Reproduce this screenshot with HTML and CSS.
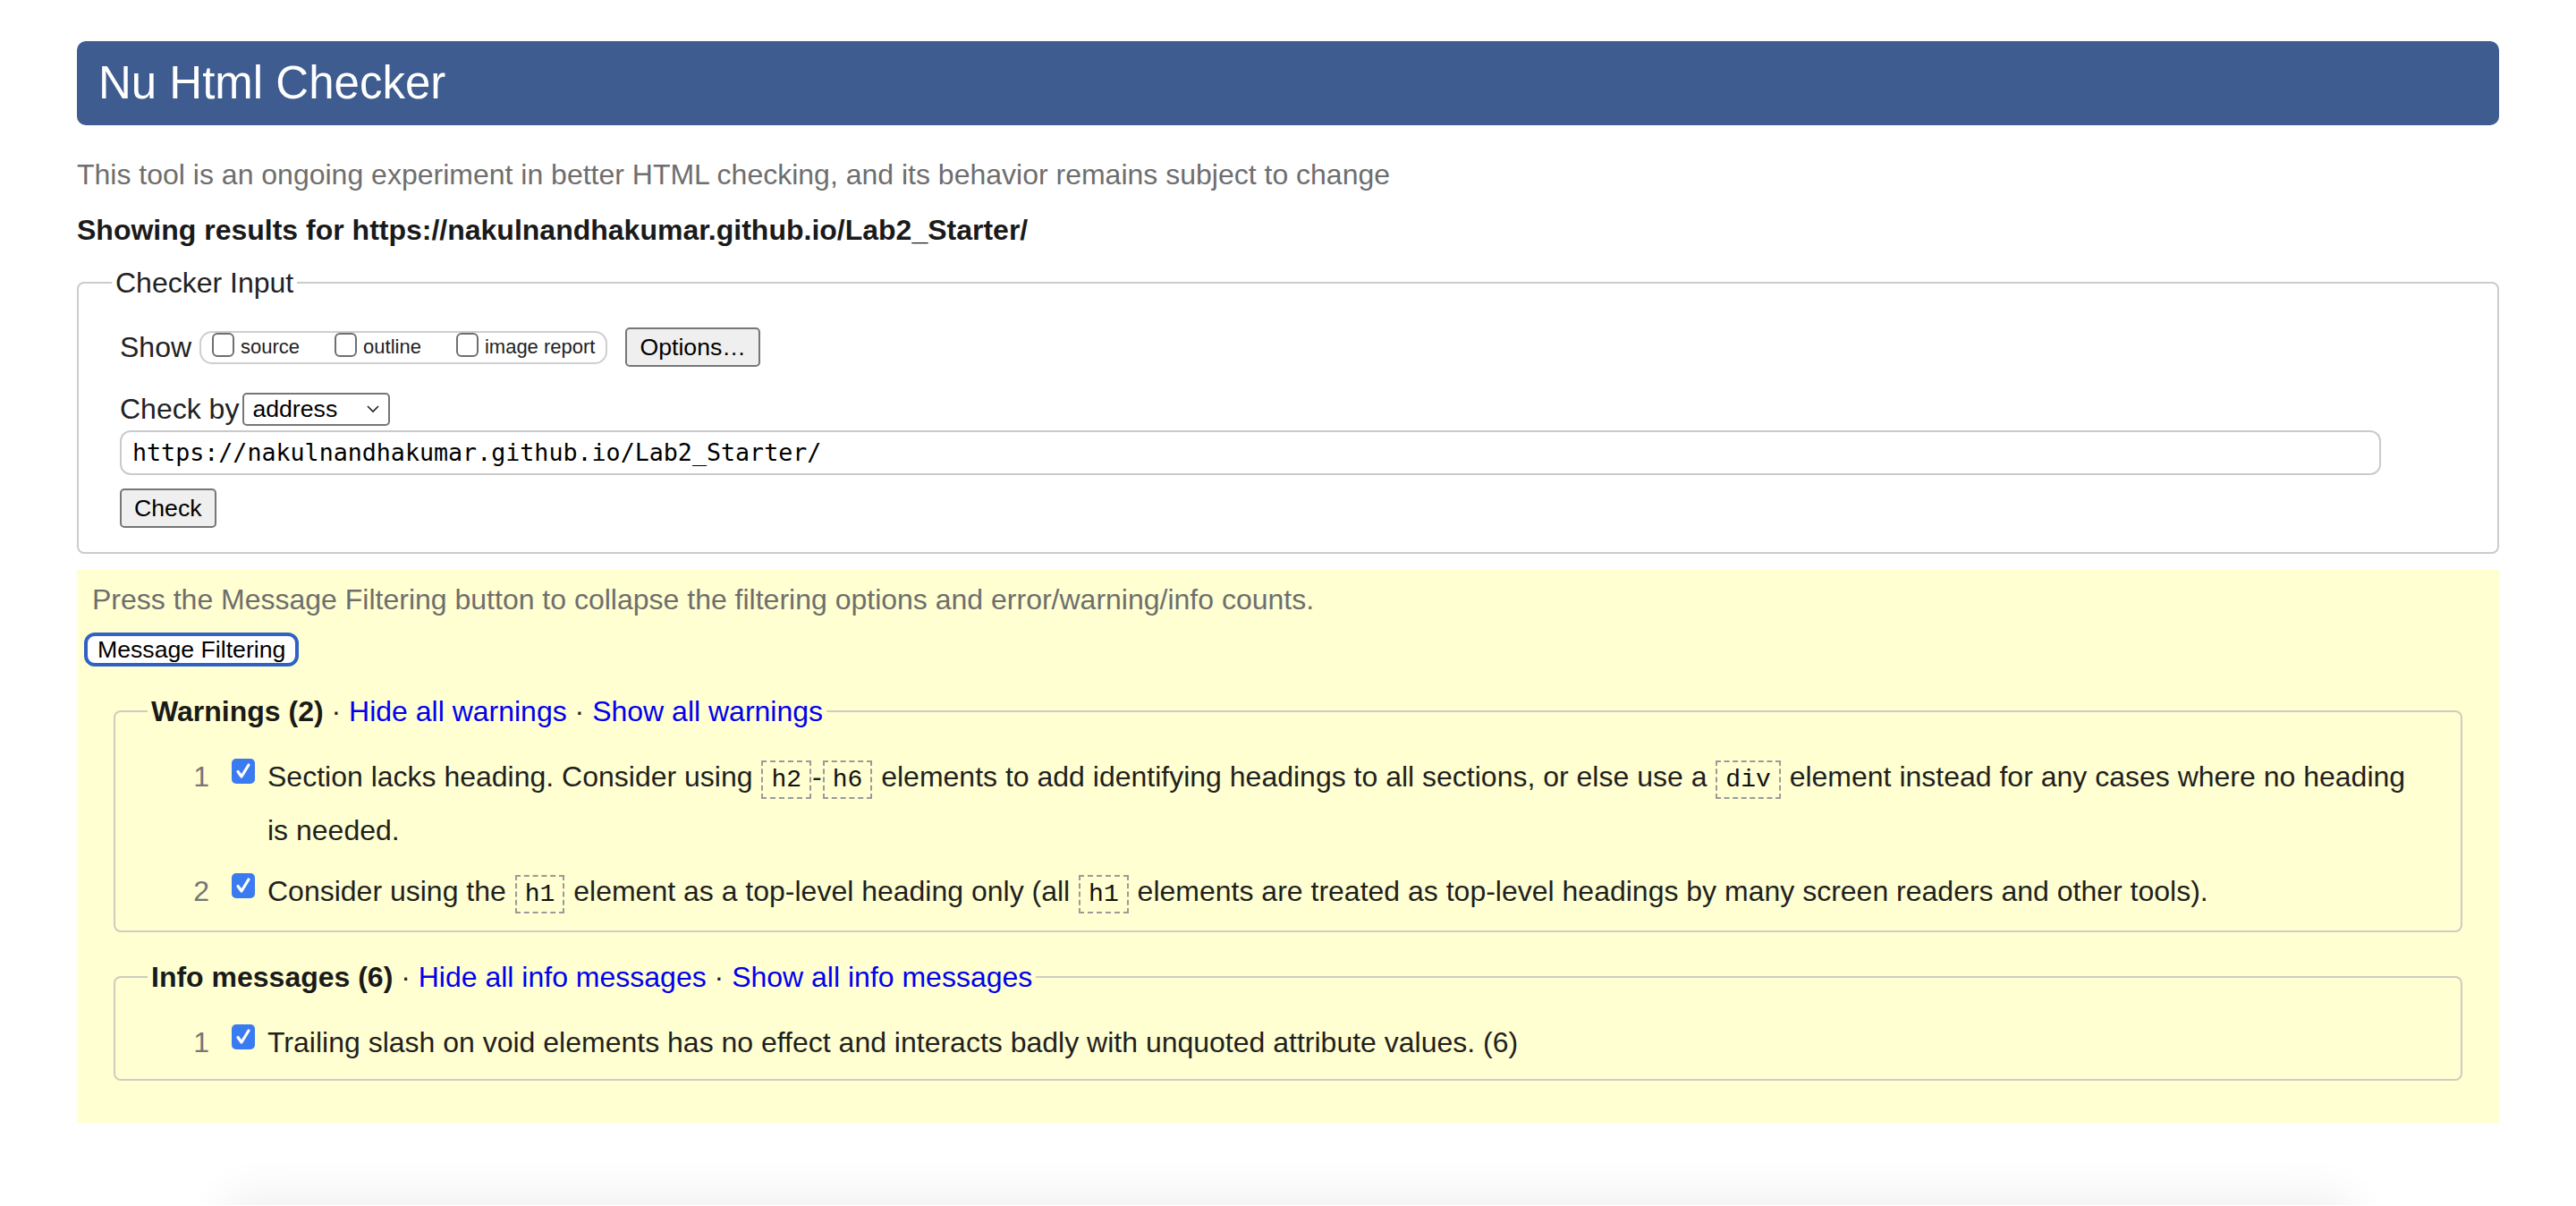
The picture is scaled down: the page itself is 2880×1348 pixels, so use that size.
FILE: index.html
```html
<!DOCTYPE html>
<html lang="en">
<head>
<meta charset="utf-8">
<title>Showing results for https://nakulnandhakumar.github.io/Lab2_Starter/ - Nu Html Checker</title>
<link rel="stylesheet" href="styles.css">
</head>
<body>
<div class="page">
  <h1 class="brand">Nu Html Checker</h1>
  <p class="tagline">This tool is an ongoing experiment in better HTML checking, and its behavior remains subject to change</p>
  <p class="results-for">Showing results for https://nakulnandhakumar.github.io/Lab2_Starter/</p>

  <fieldset class="input-box">
    <legend>Checker Input</legend>
    <div class="row show-row">
      <span class="label">Show</span>
      <span class="show-opts">
        <span class="opt"><span class="cb"></span>source</span>
        <span class="opt"><span class="cb"></span>outline</span>
        <span class="opt"><span class="cb"></span>image report</span>
      </span>
      <button class="btn" type="button">Options…</button>
    </div>
    <div class="row checkby-row">
      <span class="label">Check by</span>
      <span class="select">address<svg class="chev" width="14" height="10" viewBox="0 0 14 10"><path d="M1 2 L7 8 L13 2" fill="none" stroke="#222" stroke-width="1.6"/></svg></span>
    </div>
    <div class="url">https://nakulnandhakumar.github.io/Lab2_Starter/</div>
    <button class="btn check-btn" type="button">Check</button>
  </fieldset>

  <section class="filters">
    <p class="filter-hint">Press the Message Filtering button to collapse the filtering options and error/warning/info counts.</p>
    <button class="mf-btn" type="button">Message Filtering</button>

    <fieldset class="group">
      <legend><strong>Warnings (2)</strong> · <a href="#">Hide all warnings</a> · <a href="#">Show all warnings</a></legend>
      <div class="msg">
        <span class="num">1</span>
        <span class="ck"><svg width="26" height="28" viewBox="0 0 26 28"><rect x="0" y="0" width="26" height="28" rx="5" fill="#3b7bf2"/><path d="M7 14.5 L11 20 L19 7" fill="none" stroke="#fff" stroke-width="3.2" stroke-linecap="round" stroke-linejoin="round"/></svg></span>
        <span class="txt">Section lacks heading. Consider using <code>h2</code>-<code>h6</code> elements to add identifying headings to all sections, or else use a <code>div</code> element instead for any cases where no heading is needed.</span>
      </div>
      <div class="msg">
        <span class="num">2</span>
        <span class="ck"><svg width="26" height="28" viewBox="0 0 26 28"><rect x="0" y="0" width="26" height="28" rx="5" fill="#3b7bf2"/><path d="M7 14.5 L11 20 L19 7" fill="none" stroke="#fff" stroke-width="3.2" stroke-linecap="round" stroke-linejoin="round"/></svg></span>
        <span class="txt">Consider using the <code>h1</code> element as a top-level heading only (all <code>h1</code> elements are treated as top-level headings by many screen readers and other tools).</span>
      </div>
    </fieldset>

    <fieldset class="group info">
      <legend><strong>Info messages (6)</strong> · <a href="#">Hide all info messages</a> · <a href="#">Show all info messages</a></legend>
      <div class="msg">
        <span class="num">1</span>
        <span class="ck"><svg width="26" height="28" viewBox="0 0 26 28"><rect x="0" y="0" width="26" height="28" rx="5" fill="#3b7bf2"/><path d="M7 14.5 L11 20 L19 7" fill="none" stroke="#fff" stroke-width="3.2" stroke-linecap="round" stroke-linejoin="round"/></svg></span>
        <span class="txt">Trailing slash on void elements has no effect and interacts badly with unquoted attribute values. (6)</span>
      </div>
    </fieldset>
  </section>

  <div class="shadow-strip"><div class="shadow-box"></div></div>
</div>
</body>
</html>
```

FILE: styles.css
```css
html, body {
  margin: 0;
  padding: 0;
  background: #ffffff;
}

body {
  font-family: "Liberation Sans", Arial, Helvetica, sans-serif;
  font-size: 32px;
  color: #222222;
}

.page {
  padding: 46px 86px 0 86px;
}

.brand {
  margin: 0;
  height: 94px;
  line-height: 94px;
  padding: 0 24px;
  background: #3e5c8f;
  color: #ffffff;
  font-size: 51px;
  font-weight: normal;
  border-radius: 10px;
}

.tagline {
  margin: 35px 0 0 0;
  line-height: 40px;
  color: #6e6e6e;
}

.results-for {
  margin: 22px 0 0 0;
  line-height: 40px;
  font-weight: bold;
  color: #1a1a1a;
}

.input-box {
  margin: 19px 0 0 0;
  padding: 30px 46px 27px 46px;
  border: 2px solid #cbcbcb;
  border-radius: 8px;
}

.input-box legend {
  padding: 0 4px;
  margin-left: -9px;
  line-height: 40px;
  font-size: 32px;
}

.row {
  display: flex;
  align-items: center;
}

.show-row {
  height: 44px;
}

.label {
  line-height: 40px;
  margin-right: 9px;
}

.checkby-row .label {
  margin-right: 4px;
}

.show-opts {
  display: inline-flex;
  align-items: center;
  height: 33px;
  padding: 0 12px;
  border: 2px solid #cfcfcf;
  border-radius: 14px;
  margin-right: 20px;
}

.opt {
  display: inline-flex;
  align-items: center;
  font-size: 22px;
  line-height: 30px;
  margin-right: 39px;
}

.opt:last-child {
  margin-right: 0;
}

.cb {
  display: inline-block;
  width: 21px;
  height: 23px;
  border: 2px solid #6f6f6f;
  border-radius: 6px;
  background: #ffffff;
  margin-right: 7px;
  margin-bottom: 6px;
}

.btn {
  font-family: "Liberation Sans", Arial, Helvetica, sans-serif;
  font-size: 26.67px;
  height: 44px;
  padding: 0 14px;
  background: #efefef;
  color: #000000;
  border: 2px solid #767676;
  border-radius: 5px;
}

.checkby-row {
  margin-top: 27px;
  height: 40px;
}

.select {
  display: inline-flex;
  align-items: center;
  justify-content: space-between;
  box-sizing: border-box;
  width: 165px;
  height: 37px;
  padding: 0 10px 0 9px;
  font-size: 26.67px;
  color: #000000;
  background: #ffffff;
  border: 2px solid #767676;
  border-radius: 5px;
}

.url {
  margin-top: 4px;
  box-sizing: border-box;
  width: 2528px;
  height: 50px;
  line-height: 46px;
  padding: 0 12px;
  border: 2px solid #cacaca;
  border-radius: 12px;
  font-family: "DejaVu Sans Mono", Menlo, monospace;
  font-size: 26.67px;
  color: #000000;
}

.check-btn {
  display: block;
  margin-top: 15px;
}

.filters {
  margin-top: 18px;
  background: #ffffd1;
  padding: 13px 41px 47px 0;
}

.filter-hint {
  margin: 0 0 0 17px;
  line-height: 40px;
  color: #6e6e6e;
}

.mf-btn {
  display: block;
  margin: 17px 0 0 8px;
  height: 38px;
  padding: 0 11px;
  font-family: "Liberation Sans", Arial, Helvetica, sans-serif;
  font-size: 26.67px;
  color: #000000;
  background: #ffffff;
  border: 4px solid #2f62c4;
  border-radius: 12px;
}

.group {
  margin: 30px 0 0 41px;
  padding: 25px 34px 12px 40px;
  border: 2px solid #cdcdc0;
  border-radius: 8px;
}

.group.info {
  margin-top: 30px;
}

.group legend {
  padding: 0 4px;
  margin-left: -4px;
  line-height: 40px;
  font-size: 32px;
}

.group legend strong {
  color: #1a1a1a;
}

.group legend a {
  color: #0000ee;
  text-decoration: none;
}

.msg {
  display: flex;
  align-items: flex-start;
  line-height: 57px;
}

.msg + .msg {
  margin-top: 11px;
}

.num {
  flex: 0 0 65px;
  text-align: right;
  color: #767676;
}

.ck {
  flex: 0 0 26px;
  height: 28px;
  margin: 8px 14px 0 25px;
}

.ck svg {
  display: block;
}

.txt {
  flex: 1 1 auto;
  color: #1f1f1f;
}

code {
  font-family: "Liberation Mono", "Courier New", monospace;
  font-size: 28px;
  padding: 4px 9px;
  margin: 0 1px;
  border: 2px dashed #9a9a9a;
  color: #111111;
}

.shadow-strip {
  margin: 44px 0 0 0;
  height: 48px;
  overflow: hidden;
  padding: 48px 170px 0 170px;
  box-sizing: border-box;
}

.shadow-box {
  height: 60px;
  box-shadow: 0 0 50px 14px rgba(0, 0, 0, 0.06);
  border-radius: 40px;
}
```
